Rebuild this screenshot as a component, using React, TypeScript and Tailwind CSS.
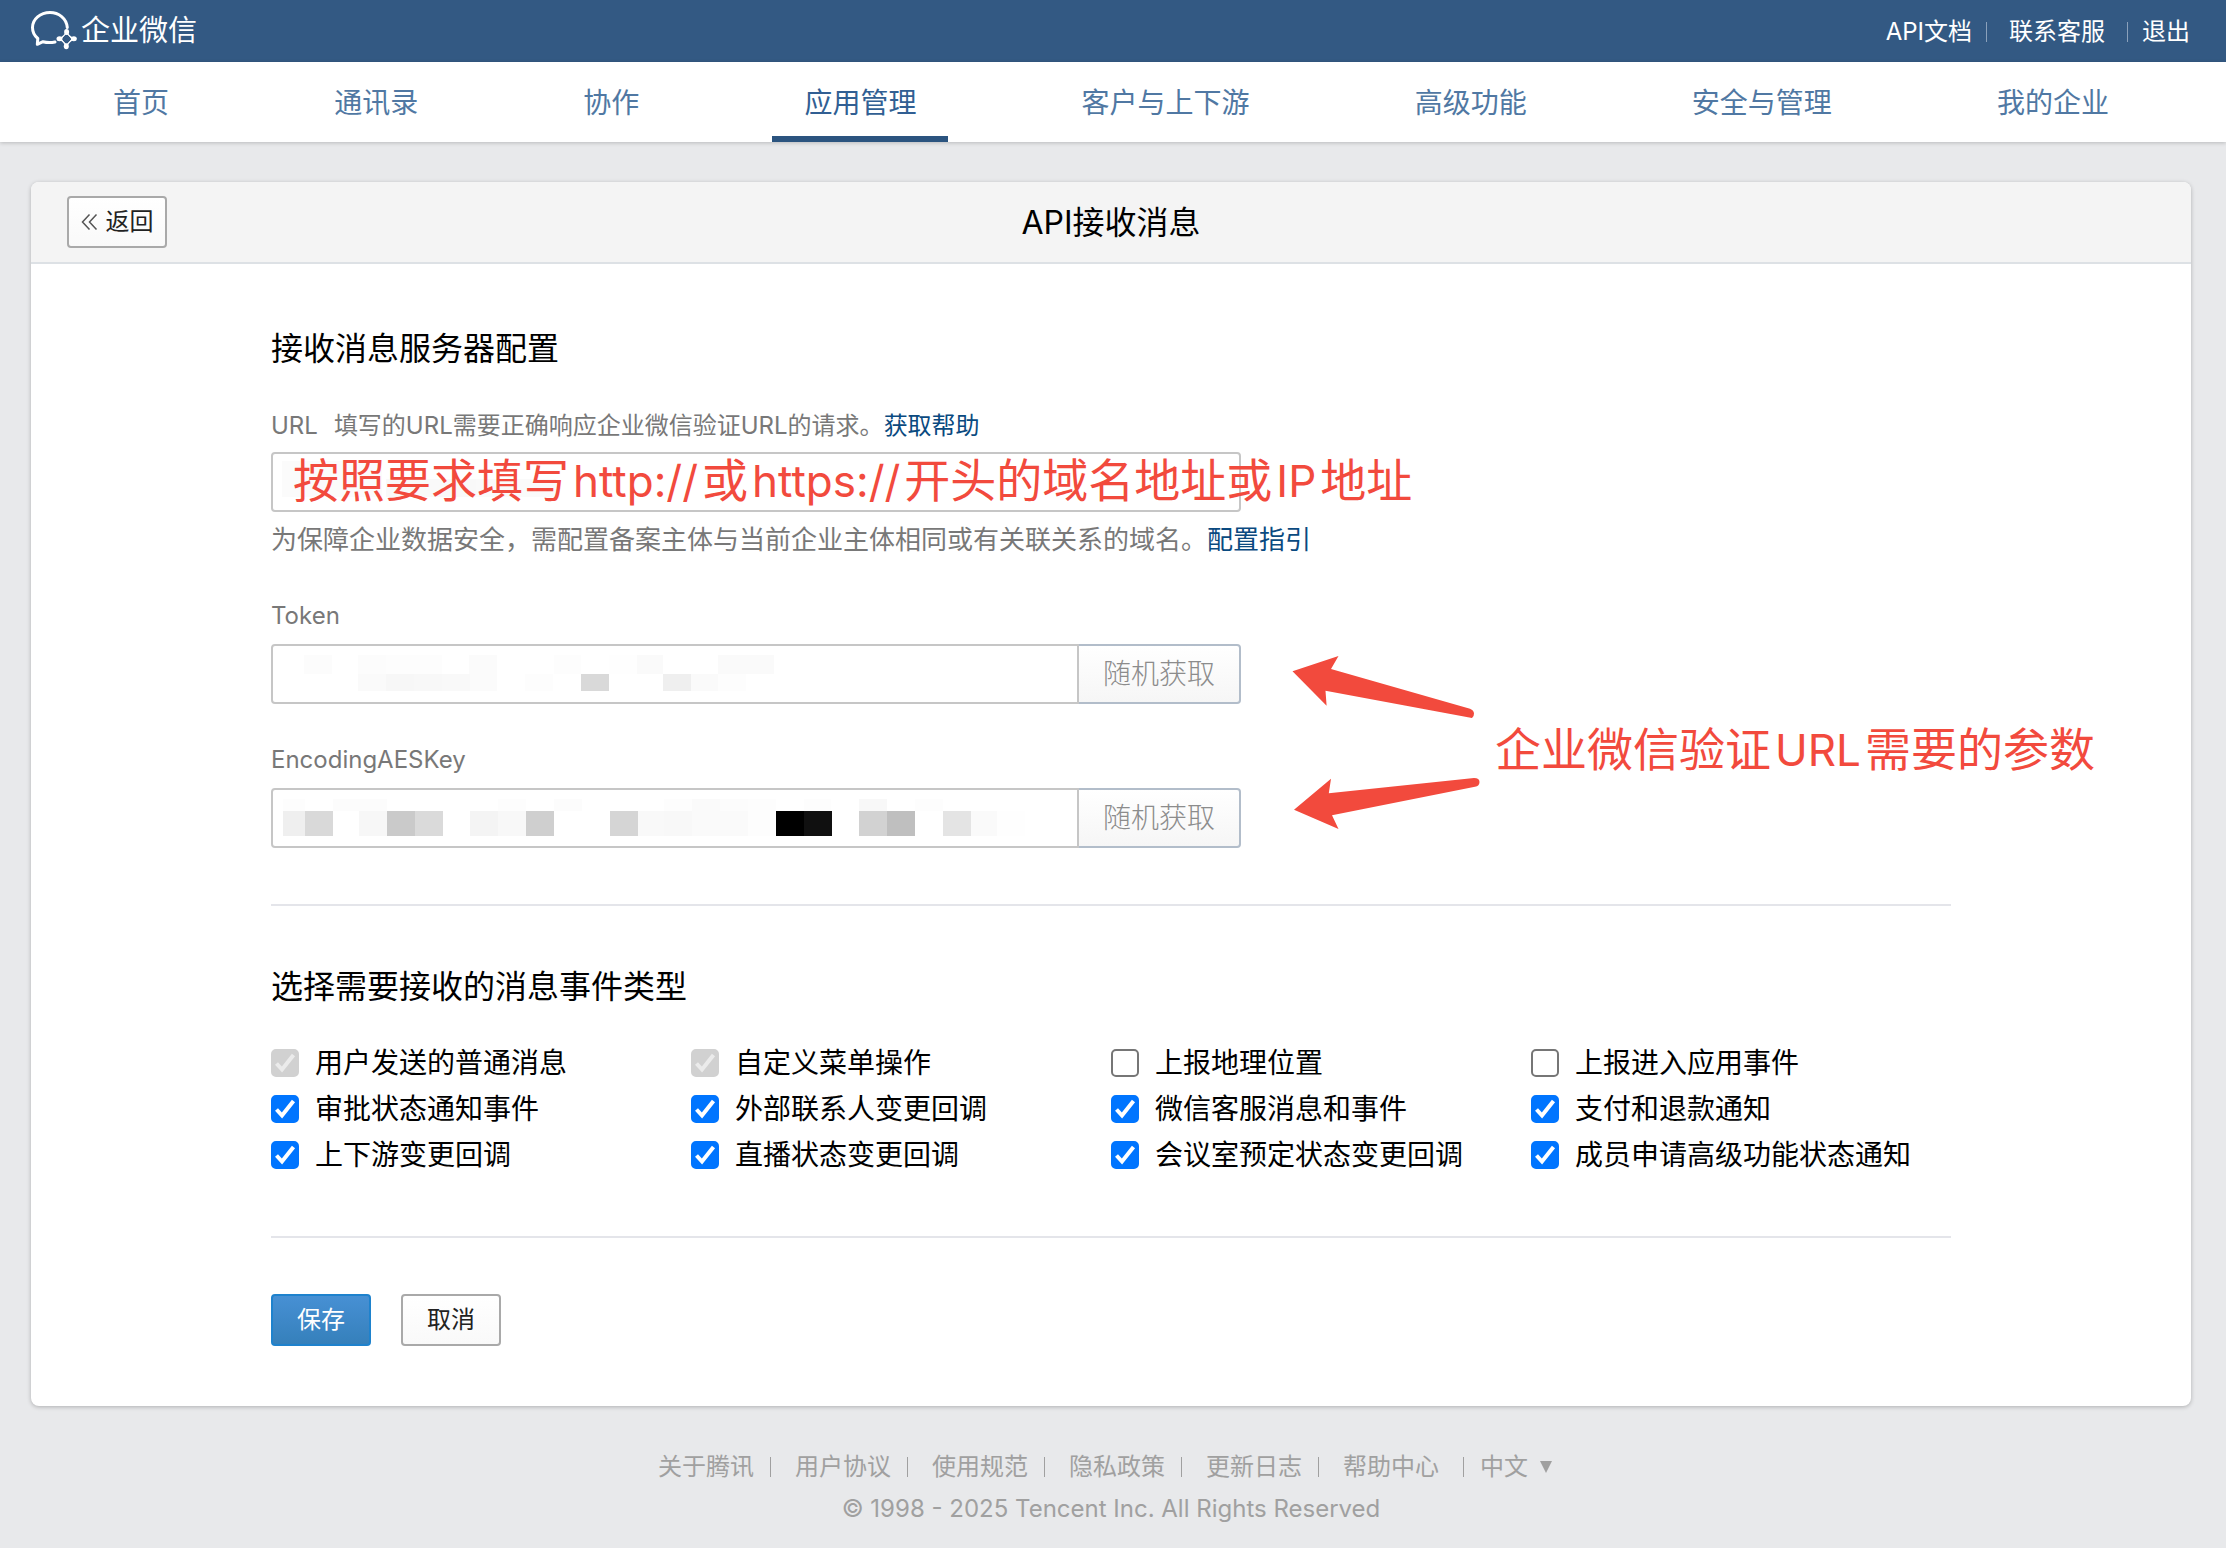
import React, { useState } from "react";

type Cell = [x: number, y: number, w: number, h: number, fill: string];

const navItems = ["首页", "通讯录", "协作", "应用管理", "客户与上下游", "高级功能", "安全与管理", "我的企业"];

const footerLinks = ["关于腾讯", "用户协议", "使用规范", "隐私政策", "更新日志", "帮助中心"];

const eventTypes = [
  { label: "用户发送的普通消息", checked: true, disabled: true },
  { label: "自定义菜单操作", checked: true, disabled: true },
  { label: "上报地理位置", checked: false },
  { label: "上报进入应用事件", checked: false },
  { label: "审批状态通知事件", checked: true },
  { label: "外部联系人变更回调", checked: true },
  { label: "微信客服消息和事件", checked: true },
  { label: "支付和退款通知", checked: true },
  { label: "上下游变更回调", checked: true },
  { label: "直播状态变更回调", checked: true },
  { label: "会议室预定状态变更回调", checked: true },
  { label: "成员申请高级功能状态通知", checked: true },
];

const urlCells: Cell[] = [
  [11, 9, 100, 36, "#fbfbfb"],
  [115, 27, 90, 18, "#f9f9f9"],
  [205, 27, 80, 18, "#fafafa"],
];

const tokenCells: Cell[] = [
  [33, 11, 28, 19, "#fcfcfc"],
  [87, 11, 28, 19, "#fcfcfc"],
  [115, 11, 56, 19, "#fdfdfd"],
  [198, 11, 28, 19, "#fbfbfb"],
  [283, 11, 27, 19, "#fdfdfd"],
  [338, 11, 28, 19, "#fefefe"],
  [366, 11, 26, 19, "#fafafa"],
  [447, 11, 56, 19, "#fafafa"],
  [87, 30, 28, 17, "#fafafa"],
  [115, 30, 28, 17, "#f7f7f7"],
  [143, 30, 28, 17, "#f8f8f8"],
  [171, 30, 28, 17, "#f9f9f9"],
  [199, 30, 27, 17, "#fbfbfb"],
  [254, 30, 28, 17, "#fdfdfd"],
  [310, 30, 28, 17, "#d9d9d9"],
  [392, 30, 28, 17, "#efefef"],
  [420, 30, 27, 17, "#fafafa"],
  [447, 30, 28, 17, "#fdfdfd"],
];

const aesKeyCells: Cell[] = [
  [12, 11, 22, 12, "#fdfdfd"],
  [62, 11, 54, 12, "#fcfcfc"],
  [227, 11, 28, 12, "#fdfdfd"],
  [283, 11, 28, 12, "#fcfcfc"],
  [393, 11, 28, 12, "#fdfdfd"],
  [421, 11, 28, 12, "#fafafa"],
  [449, 11, 28, 12, "#fcfcfc"],
  [477, 11, 28, 12, "#fdfdfd"],
  [533, 11, 27, 12, "#fdfdfd"],
  [588, 11, 28, 12, "#f8f8f8"],
  [644, 11, 28, 12, "#fdfdfd"],
  [12, 23, 22, 25, "#efefef"],
  [34, 23, 28, 25, "#d9d9d9"],
  [88, 23, 28, 25, "#f7f7f7"],
  [116, 23, 28, 25, "#cacaca"],
  [144, 23, 28, 25, "#dadada"],
  [199, 23, 28, 25, "#f4f4f4"],
  [227, 23, 28, 25, "#f8f8f8"],
  [255, 23, 28, 25, "#cfcfcf"],
  [339, 23, 28, 25, "#d5d5d5"],
  [367, 23, 26, 25, "#f9f9f9"],
  [393, 23, 28, 25, "#f8f8f8"],
  [421, 23, 56, 25, "#fafafa"],
  [477, 23, 28, 25, "#fdfdfd"],
  [505, 23, 28, 25, "#000000"],
  [533, 23, 28, 25, "#101010"],
  [588, 23, 28, 25, "#d2d2d2"],
  [616, 23, 28, 25, "#bfbfbf"],
  [672, 23, 28, 25, "#e4e4e4"],
  [700, 23, 26, 25, "#fafafa"],
  [726, 23, 28, 25, "#fefefe"],
];

function Mosaic({ cells }: { cells: Cell[] }) {
  return (
    <svg
      aria-hidden="true"
      className="pointer-events-none absolute top-0 left-0"
      width="800"
      height="60"
      viewBox="0 0 800 60"
      shapeRendering="crispEdges"
    >
      {cells.map(([x, y, w, h, fill]) => (
        <rect key={`${x}-${y}`} x={x} y={y} width={w} height={h} fill={fill} />
      ))}
    </svg>
  );
}

function Logo() {
  return (
    <a href="#home" className="flex items-center gap-1 text-white">
      <svg width="46" height="40" viewBox="0 0 46 40" fill="none" aria-hidden="true">
        <path
          d="M36.300 16.500C35.500 7.500 27.800 1.500 19 1.500C9.300 1.500 1.500 8 1.500 16.500C1.500 21 3.500 24.800 6.800 27.500L6.300 33.300L12 30.700C16 31.800 20 31.800 24 31"
          stroke="white"
          strokeWidth="3"
          strokeLinejoin="round"
          strokeLinecap="round"
        />
        <path
          d="M35.600 20.500Q37.500 26 43.300 27.700Q37.500 30 35.300 35.700Q33.500 30 28 27.700Q33.500 26 35.600 20.500Z"
          stroke="white"
          strokeWidth="1.500"
        />
        <path d="M35.500 22L41 28L35.500 34L30 28Z" fill="#335983" stroke="white" strokeWidth="1" />
        <g fill="white">
          <ellipse cx="35.600" cy="21" rx="2.500" ry="3" />
          <ellipse cx="42.800" cy="27.700" rx="3" ry="2.500" />
          <ellipse cx="35.300" cy="35.200" rx="2.500" ry="3" />
          <ellipse cx="28.500" cy="27.700" rx="3" ry="2.500" />
        </g>
      </svg>
      <span className="text-[29px] leading-10">企业微信</span>
    </a>
  );
}

function SecretField({ id, label, cells }: { id: string; label: string; cells: Cell[] }) {
  return (
    <div className="flex flex-col gap-3">
      <label htmlFor={id} className="text-2xl text-[#787878]">
        {label}
      </label>
      <div className="flex h-[60px]">
        <div className="relative min-w-0 flex-1">
          <input
            id={id}
            type="text"
            className="h-full w-full rounded-l border-2 border-[#c6c6c6] bg-white px-4 text-2xl outline-none"
          />
          <Mosaic cells={cells} />
        </div>
        <button
          type="button"
          className="w-[162px] rounded-r border-2 border-l-0 border-[#b2bdca] bg-linear-to-b from-white to-[#f6f6f6] text-[28px] font-extralight text-[#8c8c8c]"
        >
          随机获取
        </button>
      </div>
    </div>
  );
}

function EventCheckbox({ label, checked, disabled = false }: { label: string; checked: boolean; disabled?: boolean }) {
  const [on, setOn] = useState(checked);
  return (
    <label className="flex h-[46px] items-center gap-4 text-[28px] whitespace-nowrap text-black">
      <span className="relative flex size-7 shrink-0">
        <input
          type="checkbox"
          checked={on}
          disabled={disabled}
          onChange={() => setOn(!on)}
          className="peer size-7 appearance-none rounded-[5px] border-2 border-[#767676] bg-white checked:border-[#0075ff] checked:bg-[#0075ff] disabled:border-[#d1d1d1] disabled:bg-[#d1d1d1]"
        />
        <svg
          aria-hidden="true"
          viewBox="0 0 28 28"
          className="pointer-events-none absolute inset-0 hidden size-7 text-white peer-checked:block peer-disabled:text-[#ebebeb]"
        >
          <path d="M5.500 14.500L11 20.500L22.500 6" fill="none" stroke="currentColor" strokeWidth="4" />
        </svg>
      </span>
      {label}
    </label>
  );
}

export default function App() {
  return (
    <div className="flex min-h-screen flex-col bg-[#e8e9eb] font-['Inter','Noto_Sans_CJK_SC',sans-serif] text-black">
      <header className="flex h-[62px] items-center justify-between bg-[#335983] pr-9 pl-[31px]">
        <Logo />
        <div className="flex items-center pt-0.5 text-2xl text-white">
          <a href="#docs">API文档</a>
          <span className="mr-[22px] ml-[14px] h-5 w-px bg-[#8ba1bb]" />
          <a href="#support">联系客服</a>
          <span className="mr-[14px] ml-[22px] h-5 w-px bg-[#8ba1bb]" />
          <a href="#logout">退出</a>
        </div>
      </header>

      <nav className="flex h-20 justify-between bg-white pr-[85px] pl-[81px] text-[28px] shadow-[0_1px_4px_rgba(0,0,0,0.2)]">
        {navItems.map((item) => (
          <a
            key={item}
            href={`#${item}`}
            aria-current={item === "应用管理" ? "page" : undefined}
            className="flex items-center border-b-6 border-transparent px-8 pt-2 text-[#5078a3] aria-[current=page]:border-[#2b547f] aria-[current=page]:text-[#315f93]"
          >
            {item}
          </a>
        ))}
      </nav>

      <main className="mt-10 mr-[35px] ml-[31px] overflow-hidden rounded-lg bg-white shadow-[0_1px_4px_rgba(0,0,0,0.25)]">
        <div className="grid h-[82px] grid-cols-[1fr_auto_1fr] items-center border-b-2 border-[#dde1e5] bg-[#f4f4f4] px-9">
          <button
            type="button"
            className="flex h-[52px] w-[100px] items-center justify-center gap-2 rounded border-2 border-[#a9a9a9] bg-linear-to-b from-white to-[#f9f9f9] text-2xl text-[#222]"
          >
            <svg width="17" height="16" viewBox="0 0 17 16" fill="none" stroke="#555" strokeWidth="1.500" aria-hidden="true">
              <path d="M8.500 0.500L1.500 8L8.500 15.500M15.500 0.500L8.500 8L15.500 15.500" />
            </svg>
            返回
          </button>
          <h1 className="pt-0.5 text-[32px]">API接收消息</h1>
        </div>

        <form className="mr-60 ml-60 pt-[60px] pb-[60px]" onSubmit={(e) => e.preventDefault()}>
          <section>
            <h2 className="text-[32px] leading-[50px]">接收消息服务器配置</h2>

            <div className="mt-[34px] w-[970px]">
              <div className="flex text-2xl leading-9 whitespace-nowrap text-[#787878]">
                <label htmlFor="url">URL</label>
                <span className="ml-4">填写的URL需要正确响应企业微信验证URL的请求。</span>
                <a href="#help" className="text-[#0a4a80]">
                  获取帮助
                </a>
              </div>
              <div className="relative mt-2 h-[60px]">
                <input
                  id="url"
                  type="text"
                  className="h-full w-full rounded border-2 border-[#c6c6c6] bg-white px-4 text-2xl outline-none"
                />
                <Mosaic cells={urlCells} />
                <p className="pointer-events-none absolute top-0 left-[22px] flex items-baseline gap-1 text-[46px] leading-[56px] whitespace-nowrap text-[#f24a3d]">
                  <span>按照要求填写</span>
                  <span className="text-[44px]">http://</span>
                  <span>或</span>
                  <span className="text-[44px]">https://</span>
                  <span>开头的域名地址或</span>
                  <span className="text-[44px]">IP</span>
                  <span>地址</span>
                </p>
              </div>
              <p className="mt-[10px] text-[26px] leading-9 whitespace-nowrap text-[#787878]">
                为保障企业数据安全，需配置备案主体与当前企业主体相同或有关联关系的域名。
                <a href="#guide" className="text-[#0a4a80]">
                  配置指引
                </a>
              </p>
            </div>

            <div className="relative mt-[42px] w-[970px]">
              <div className="flex flex-col gap-10">
                <SecretField id="token" label="Token" cells={tokenCells} />
                <SecretField id="aes-key" label="EncodingAESKey" cells={aesKeyCells} />
              </div>
              <div className="pointer-events-none absolute top-[56px] left-[1021px] flex items-center gap-[14px] text-[#f24a3d]">
                <svg width="189" height="174" viewBox="0 0 189 174" fill="currentColor" aria-hidden="true">
                  <path d="M0.500 15.300L46.500 0L39 13L178 52.700Q182 54.500 182 57.500Q182 61 180 62L33.500 34.700L34.600 49.700Z" />
                  <path d="M2 153.700L39 122.700L36.800 137.300L182 122Q187.500 122 187.500 126Q187.500 130 183 130.700L40 159.300L46.500 173Z" />
                </svg>
                <p className="flex items-baseline gap-1 pt-3 text-[46px] whitespace-nowrap">
                  <span>企业微信验证</span>
                  <span className="text-[44px]">URL</span>
                  <span>需要的参数</span>
                </p>
              </div>
            </div>
          </section>

          <hr className="mt-14 border-t-2 border-[#e4e5ea]" />

          <section className="pt-14">
            <h2 className="text-[32px] leading-[50px]">选择需要接收的消息事件类型</h2>
            <div className="mt-7 grid grid-cols-4">
              {eventTypes.map((type) => (
                <EventCheckbox key={type.label} {...type} />
              ))}
            </div>
          </section>

          <hr className="mt-[58px] border-t-2 border-[#e4e5ea]" />

          <div className="mt-14 flex gap-[30px] text-2xl">
            <button
              type="submit"
              className="h-[52px] w-[100px] rounded border-2 border-[#1e82cd] bg-linear-to-b from-[#4790d4] to-[#3580bb] text-white"
            >
              保存
            </button>
            <button
              type="button"
              className="h-[52px] w-[100px] rounded border-2 border-[#a9a9a9] bg-linear-to-b from-white to-[#f9f9f9] text-[#222]"
            >
              取消
            </button>
          </div>
        </form>
      </main>

      <footer className="flex flex-col items-center pt-10 pr-1 pb-4 text-2xl text-[#a0a0a0]">
        <div className="flex items-center pr-3 leading-[42px]">
          {footerLinks.map((link, i) => (
            <React.Fragment key={link}>
              <a href={`#${link}`}>{link}</a>
              <span className={i === footerLinks.length - 1 ? "mr-4 ml-6 h-5 w-px bg-[#a0a0a0]" : "mr-6 ml-4 h-5 w-px bg-[#a0a0a0]"} />
            </React.Fragment>
          ))}
          <button type="button" className="flex items-center gap-3">
            中文
            <svg width="12" height="12" viewBox="0 0 12 12" fill="currentColor" aria-hidden="true">
              <path d="M0 0H12L6 12Z" />
            </svg>
          </button>
        </div>
        <p className="leading-[42px]">© 1998 - 2025 Tencent Inc. All Rights Reserved</p>
      </footer>
    </div>
  );
}
